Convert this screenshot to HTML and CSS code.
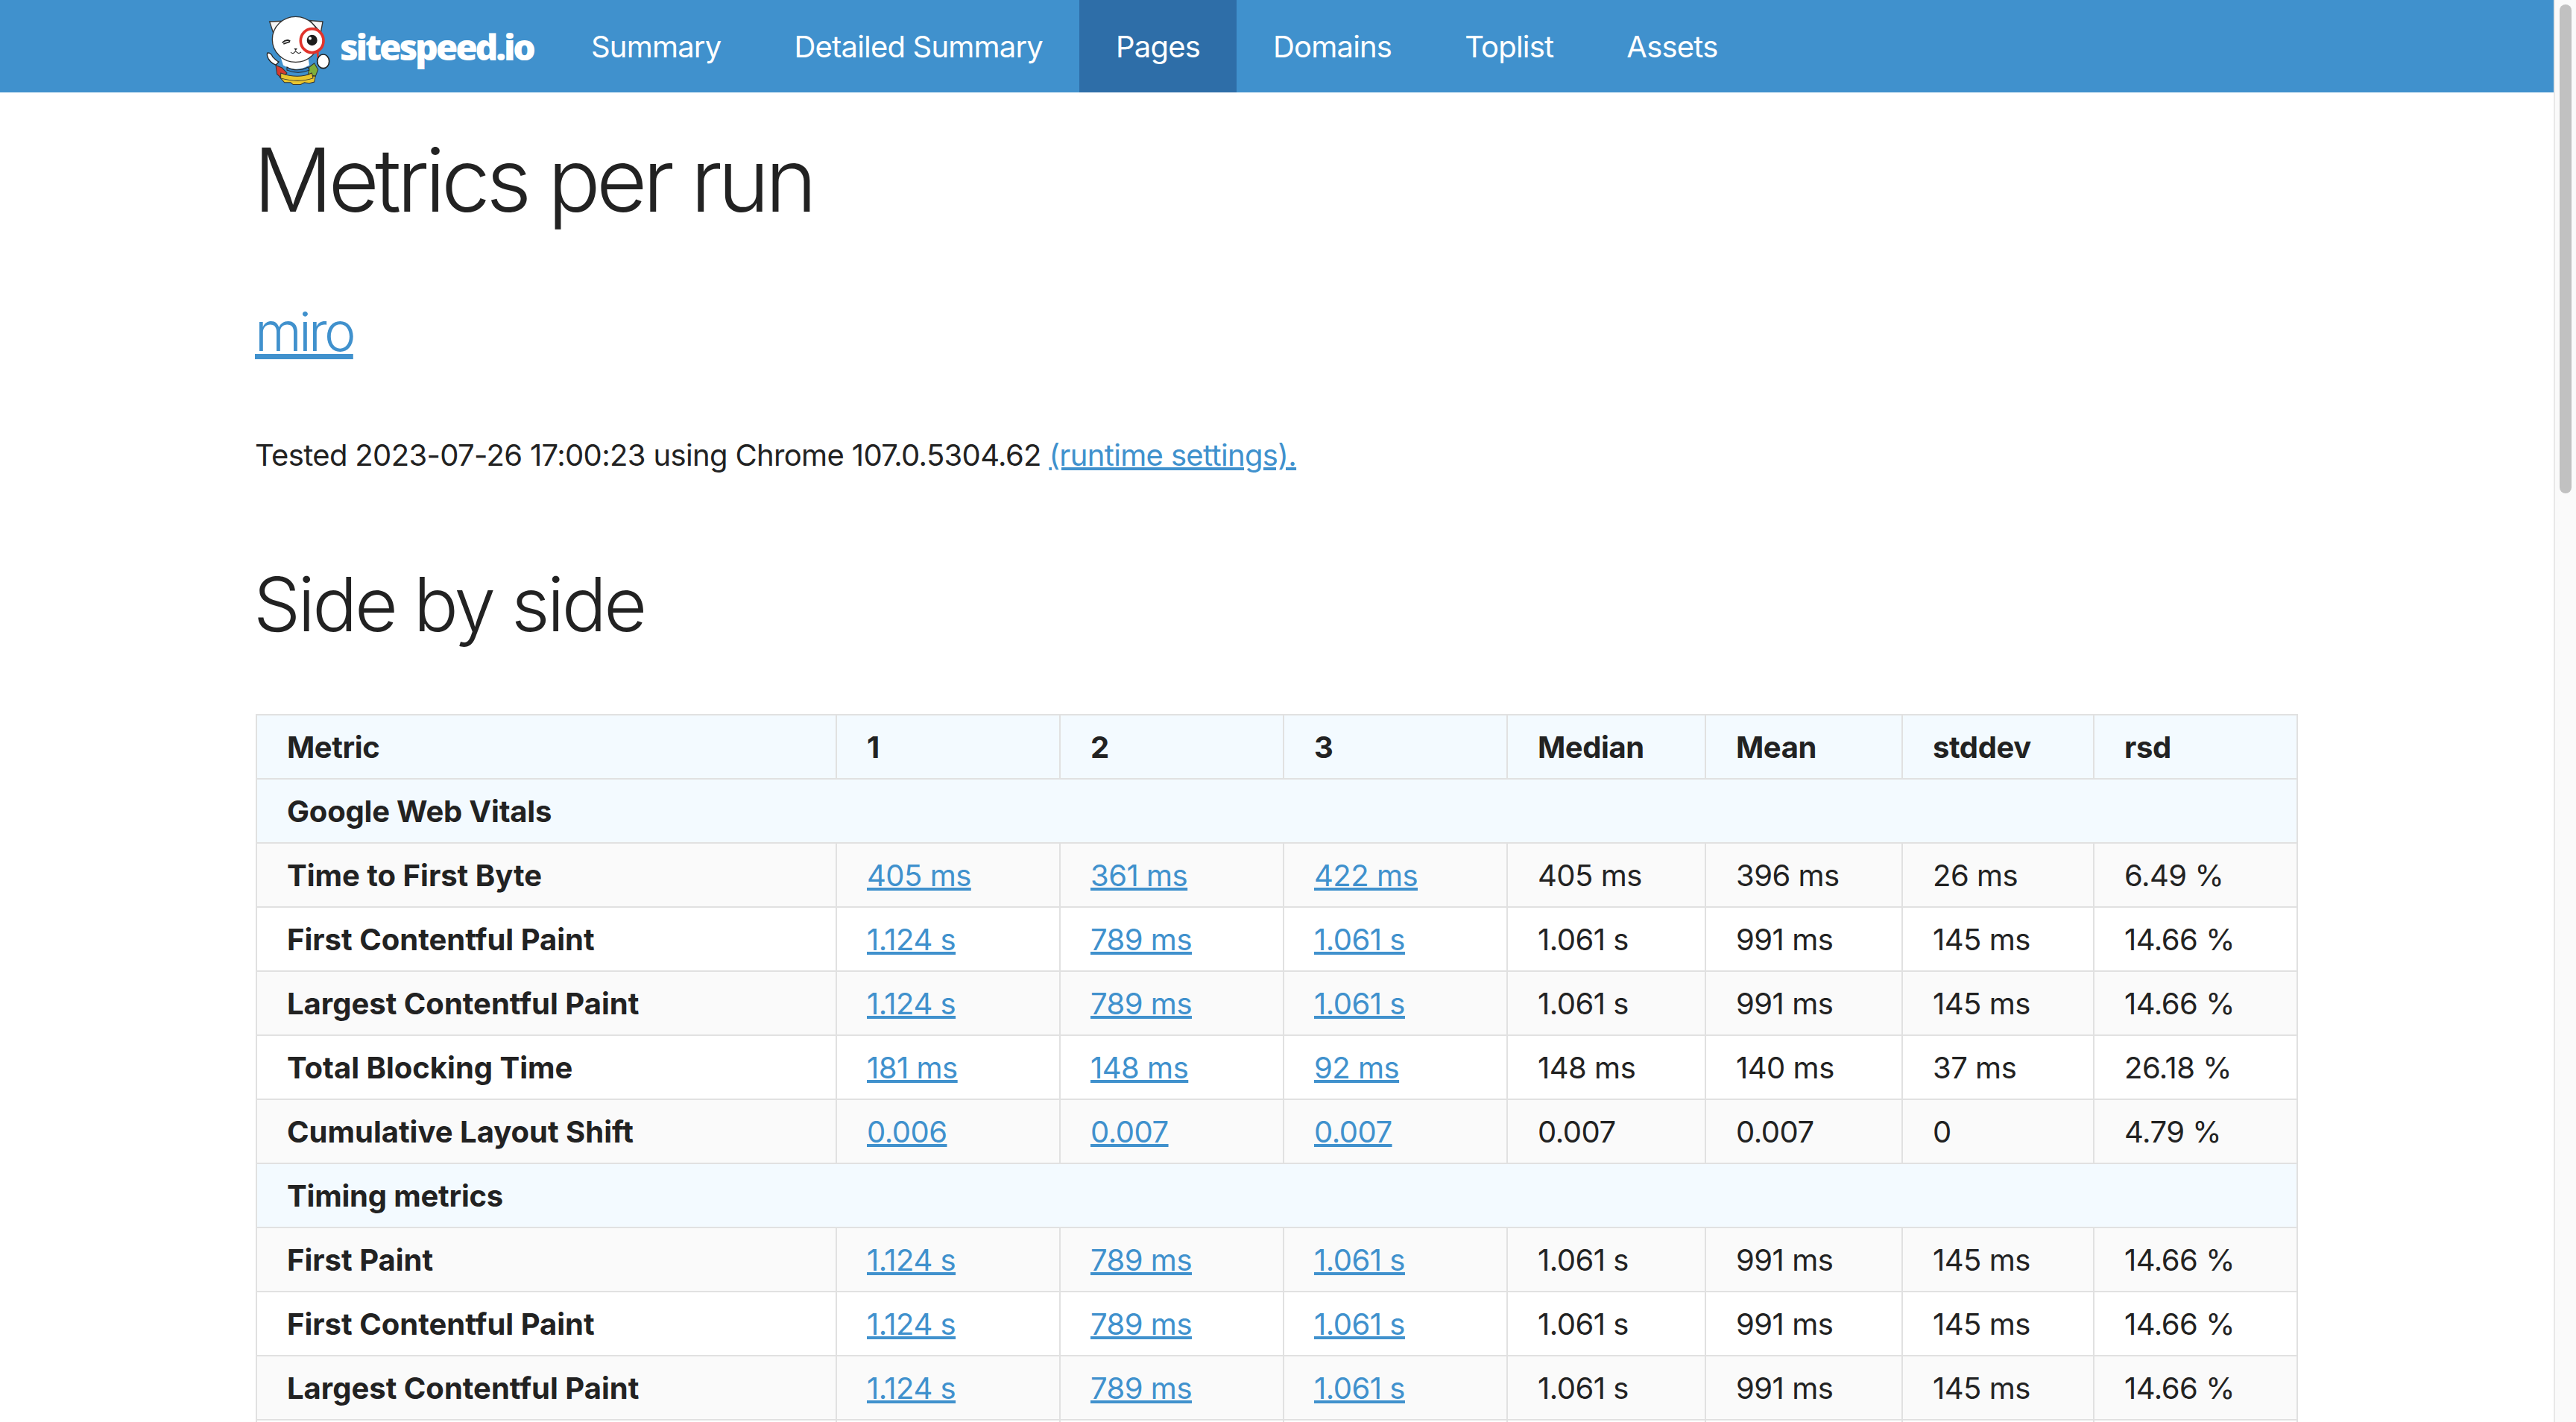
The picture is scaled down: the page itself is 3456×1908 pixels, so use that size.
FILE: index.html
```html
<!DOCTYPE html>
<html>
<head>
    <meta charset="UTF-8">
    <meta name="viewport" content="width=device-width, initial-scale=1">
    <title>sitespeed.io - Metrics per run</title>
    <link rel="stylesheet" href="styles.css">
</head>

<body>
    <div class="page">
        <div class="content">
            <nav class="navbar">
                <a class="brand" href="#">
                    <svg class="cat" viewBox="100 60 270 280" preserveAspectRatio="none">
                        <!-- gear -->
                        <path d="M160 300 l80 10 l65 -15 l-5 25 l-20 5 l-20 -3 l-15 8 l-30 0 l-10 -8 l-25 0 z" fill="#e8c52e" stroke="#333" stroke-width="3"/>
                        <path d="M145 255 l25 10 l20 20 l-20 20 l-20 -15 z" fill="#d6392e" stroke="#333" stroke-width="3"/>
                        <path d="M280 262 l20 -15 l15 25 l-10 25 l-30 -5 z" fill="#7fae3c" stroke="#333" stroke-width="3"/>
                        <path d="M165 285 q70 25 125 0 l5 20 q-60 20 -130 0 z" fill="#e8c52e" stroke="#333" stroke-width="3"/>
                        <!-- body and collar -->
                        <path d="M165 225 h110 l5 30 q-55 30 -105 0 z" fill="#fff"/>
                        <path d="M190 262 q40 22 85 0 l5 12 q-45 18 -90 0 z" fill="#2f7fc4" stroke="#222" stroke-width="3"/>
                        <path d="M112 207 q15 0 20 15 q15 15 25 20 l-12 12 q-20 -8 -30 -25 q-8 -15 -3 -22 z" fill="#fff" stroke="#222" stroke-width="4"/>
                        <!-- ears and head -->
                        <path d="M120 86 L178 84 L135 130 Z" fill="#f4f4f4" stroke="#333" stroke-width="4"/>
                        <path d="M334 86 L282 82 L326 128 Z" fill="#f4f4f4" stroke="#333" stroke-width="4"/>
                        <ellipse cx="225" cy="155" rx="94" ry="88" fill="#fff" stroke="#333" stroke-width="4"/>
                        <path d="M171 168 q16 -16 32 -6 M176 172 l26 -8" fill="none" stroke="#222" stroke-width="5"/>
                        <path d="M218 190 l14 0 l-7 8 z" fill="#222"/>
                        <path d="M205 205 q10 10 20 -6 q10 16 22 5" fill="none" stroke="#222" stroke-width="3"/>
                        <!-- magnifying glass -->
                        <rect x="310" y="205" width="8" height="20" fill="#d6392e"/>
                        <circle cx="291" cy="160" r="46" fill="#fff" stroke="#e0332b" stroke-width="11"/>
                        <circle cx="291" cy="158" r="21" fill="#1d1d1d"/>
                        <circle cx="283" cy="151" r="6" fill="#fff"/>
                        <ellipse cx="336" cy="240" rx="24" ry="27" fill="#fff" stroke="#222" stroke-width="5"/>
                    </svg>
                    <span class="brand-name">sitespeed.io</span>
                </a>
                <ul class="nav-links">
                    <li><a href="#">Summary</a></li>
                    <li><a href="#">Detailed Summary</a></li>
                    <li class="active"><a href="#">Pages</a></li>
                    <li><a href="#">Domains</a></li>
                    <li><a href="#">Toplist</a></li>
                    <li><a href="#">Assets</a></li>
                </ul>
            </nav>

            <div class="container">
                <h1>Metrics per run</h1>
                <h3 class="page-link"><a href="#">miro</a></h3>
                <p class="tested">Tested 2023-07-26 17:00:23 using Chrome 107.0.5304.62 <a href="#">(runtime settings).</a></p>
                <h2>Side by side</h2>

                <table class="metrics">
                    <thead>
                        <tr><th>Metric</th><th>1</th><th>2</th><th>3</th><th>Median</th><th>Mean</th><th>stddev</th><th>rsd</th></tr>
                    </thead>
                    <tbody>
                        <tr class="group"><td colspan="8">Google Web Vitals</td></tr>
                        <tr><th>Time to First Byte</th><td><a href="#">405 ms</a></td><td><a href="#">361 ms</a></td><td><a href="#">422 ms</a></td><td>405 ms</td><td>396 ms</td><td>26 ms</td><td>6.49 %</td></tr>
                        <tr><th>First Contentful Paint</th><td><a href="#">1.124 s</a></td><td><a href="#">789 ms</a></td><td><a href="#">1.061 s</a></td><td>1.061 s</td><td>991 ms</td><td>145 ms</td><td>14.66 %</td></tr>
                        <tr><th>Largest Contentful Paint</th><td><a href="#">1.124 s</a></td><td><a href="#">789 ms</a></td><td><a href="#">1.061 s</a></td><td>1.061 s</td><td>991 ms</td><td>145 ms</td><td>14.66 %</td></tr>
                        <tr><th>Total Blocking Time</th><td><a href="#">181 ms</a></td><td><a href="#">148 ms</a></td><td><a href="#">92 ms</a></td><td>148 ms</td><td>140 ms</td><td>37 ms</td><td>26.18 %</td></tr>
                        <tr><th>Cumulative Layout Shift</th><td><a href="#">0.006</a></td><td><a href="#">0.007</a></td><td><a href="#">0.007</a></td><td>0.007</td><td>0.007</td><td>0</td><td>4.79 %</td></tr>
                        <tr class="group"><td colspan="8">Timing metrics</td></tr>
                        <tr><th>First Paint</th><td><a href="#">1.124 s</a></td><td><a href="#">789 ms</a></td><td><a href="#">1.061 s</a></td><td>1.061 s</td><td>991 ms</td><td>145 ms</td><td>14.66 %</td></tr>
                        <tr><th>First Contentful Paint</th><td><a href="#">1.124 s</a></td><td><a href="#">789 ms</a></td><td><a href="#">1.061 s</a></td><td>1.061 s</td><td>991 ms</td><td>145 ms</td><td>14.66 %</td></tr>
                        <tr><th>Largest Contentful Paint</th><td><a href="#">1.124 s</a></td><td><a href="#">789 ms</a></td><td><a href="#">1.061 s</a></td><td>1.061 s</td><td>991 ms</td><td>145 ms</td><td>14.66 %</td></tr>
                        <tr class="cut"><th></th><td></td><td></td><td></td><td></td><td></td><td></td><td></td></tr>
                    </tbody>
                </table>
            </div>
        </div>

        <div class="scrollbar"><div class="scrollbar-thumb"></div></div>
    </div>
</body>
</html>
```

FILE: styles.css
```css
* {
    box-sizing: border-box;
}

html, body {
    margin: 0;
    height: 100%;
    overflow: hidden;
}

body {
    font-family: Inter, "Noto Sans", sans-serif;
    font-size: 40px;
    letter-spacing: -0.65px;
    color: #222;
    background: white;
}

a {
    color: #4091cd;
}

.page {
    display: flex;
    height: 100vh;
    overflow: hidden;
}

.content {
    flex: 1;
    min-width: 0;
}

/* top bar */
.navbar {
    display: flex;
    align-items: stretch;
    height: 124px;
    padding-left: 355px;
    background: #4091cd;
}

.brand {
    display: flex;
    align-items: center;
    width: 389px;
    color: white;
    text-decoration: none;
}

.cat {
    width: 90px;
    height: 97px;
    margin-top: 12px;
    flex-shrink: 0;
}

.brand-name {
    margin-left: 11px;
    font-family: "Open Sans", sans-serif;
    font-size: 48px;
    font-weight: 800;
    letter-spacing: -3.2px;
}

.nav-links {
    display: flex;
    margin: 0;
    padding: 0;
    list-style: none;
    letter-spacing: -0.8px;
}

.nav-links a {
    display: flex;
    align-items: center;
    height: 100%;
    padding: 0 49px;
    color: white;
    text-decoration: none;
}

.nav-links .active {
    background: #2e6ea8;
}

/* main column */
.container {
    padding: 0 343px 0 342px;
}

h1 {
    margin: 50px 0 0 -2px;
    font-size: 118px;
    font-weight: 300;
    letter-spacing: -5.8px;
    line-height: 134px;
}

.page-link {
    margin: 97px 0 0;
    font-size: 72px;
    font-weight: 300;
    letter-spacing: -3.8px;
    line-height: 80px;
}

.tested {
    margin: 96px 0 0;
    line-height: 60px;
}

h2 {
    margin: 115px 0 0 -2px;
    font-size: 100px;
    font-weight: 300;
    letter-spacing: -3.6px;
    line-height: 110px;
}

/* metrics table */
.metrics {
    width: 2740px;
    margin: 92px 0 0 1px;
    border-collapse: collapse;
    table-layout: fixed;
}

.metrics th,
.metrics td {
    height: 86px;
    padding: 0 40px;
    border: 2px solid #e1e1e1;
    text-align: left;
    white-space: nowrap;
    letter-spacing: -0.5px;
}

.metrics th {
    font-weight: 700;
}

.metrics tbody th {
    letter-spacing: 0;
}

.metrics thead th {
    letter-spacing: -0.4px;
}

.metrics th:nth-child(1) { width: 778px; }
.metrics th:nth-child(2),
.metrics th:nth-child(3),
.metrics th:nth-child(4) { width: 300px; }
.metrics th:nth-child(5) { width: 266px; }
.metrics th:nth-child(6) { width: 264px; }
.metrics th:nth-child(7) { width: 257px; }

.metrics thead th,
.metrics .group td {
    background: #f3faff;
}

.metrics .group td {
    font-weight: 700;
    letter-spacing: -0.2px;
}

.metrics tbody tr:nth-child(even) th,
.metrics tbody tr:nth-child(even) td {
    background: #fafafa;
}

/* macOS style scrollbar */
.scrollbar {
    flex: 0 0 30px;
    padding: 6px 6px 0 6px;
    border-left: 2px solid #e8e8e8;
    background: #fafafa;
}

.scrollbar-thumb {
    width: 16px;
    height: 656px;
    border-radius: 8px;
    background: #c1c1c1;
}
```
